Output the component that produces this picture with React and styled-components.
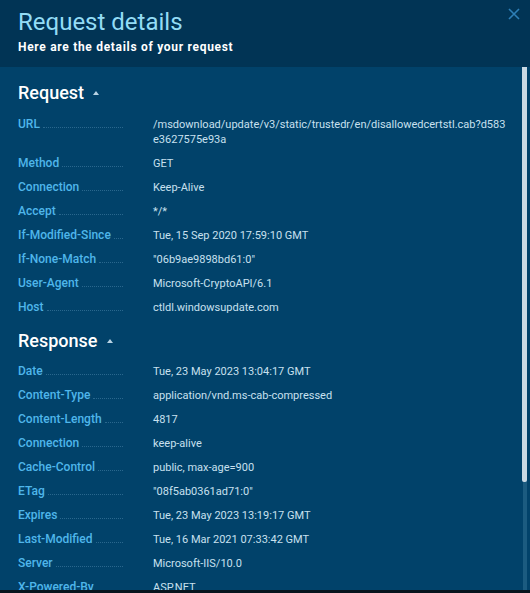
import React from "react";
import styled, { createGlobalStyle } from "styled-components";

const GlobalStyle = createGlobalStyle`
  html, body {
    margin: 0;
    padding: 0;
    background: #07141d;
  }
  body {
    font-family: Roboto, "Liberation Sans", sans-serif;
  }
`;

const Panel = styled.div`
  width: 530px;
  height: 590px;
  display: flex;
  flex-direction: column;
  background: #01426a;
  overflow: hidden;
`;

const Header = styled.div`
  position: relative;
  height: 67px;
  flex-shrink: 0;
  box-sizing: border-box;
  padding: 6px 18px 0;
  background: #013455;
`;

const Title = styled.h1`
  margin: 0;
  font-size: 24px;
  line-height: 32px;
  font-weight: 400;
  color: #93dcf5;
`;

const Subtitle = styled.div`
  margin-top: 2px;
  font-size: 12px;
  font-weight: 700;
  letter-spacing: 0.7px;
  color: #ffffff;
`;

const Close = styled.button`
  position: absolute;
  top: 6px;
  right: 8px;
  width: 16px;
  height: 16px;
  padding: 0;
  border: 0;
  background: none;
  color: #2e7fb7;
  cursor: pointer;
`;

const BodyWrap = styled.div`
  position: relative;
  flex: 1;
  min-height: 0;
`;

const Body = styled.div`
  height: 100%;
  overflow: hidden;
  padding-top: 4px;
  box-sizing: border-box;
`;

const Track = styled.div`
  position: absolute;
  top: 0;
  bottom: 0;
  right: 3px;
  width: 4px;
  background: #1b5b80;
`;

const Thumb = styled.div`
  position: absolute;
  top: 0;
  right: 3px;
  width: 5px;
  height: 415px;
  border-radius: 0 0 2px 2px;
  background: #c9d9e4;
`;

const Section = styled.section`
  padding: 0 10px 0 18px;
`;

const SectionTitle = styled.h2`
  margin: 0;
  height: ${(p) => (p.$first ? 42 : 40)}px;
  display: flex;
  align-items: center;
  gap: 9px;
  font-size: 18px;
  font-weight: 500;
  color: #ffffff;
`;

const Caret = styled.span`
  width: 0;
  height: 0;
  margin-top: 1px;
  border-left: 3.5px solid transparent;
  border-right: 3.5px solid transparent;
  border-bottom: 4px solid #b9d3e4;
`;

const Row = styled.div`
  display: grid;
  grid-template-columns: 105px 356px;
  column-gap: 30px;
  align-items: baseline;
  padding: 4px 0 5px;
  font-size: 11.5px;
  line-height: 15px;
`;

const Label = styled.div`
  display: flex;
  align-items: baseline;
  font-weight: 500;
  font-size: 12px;
  color: #4fb6ea;
  white-space: nowrap;
  overflow: hidden;

  &::after {
    content: "";
    flex: 1;
    min-width: 4px;
    margin-left: 3px;
    border-bottom: 1px dotted #2a678d;
  }
`;

const Value = styled.div`
  color: #c8e0ef;
  font-size: 11px;
  word-break: break-all;
`;

const request = [
  ["URL", "/msdownload/update/v3/static/trustedr/en/disallowedcertstl.cab?d583e3627575e93a"],
  ["Method", "GET"],
  ["Connection", "Keep-Alive"],
  ["Accept", "*/*"],
  ["If-Modified-Since", "Tue, 15 Sep 2020 17:59:10 GMT"],
  ["If-None-Match", "\"06b9ae9898bd61:0\""],
  ["User-Agent", "Microsoft-CryptoAPI/6.1"],
  ["Host", "ctldl.windowsupdate.com"],
];

const response = [
  ["Date", "Tue, 23 May 2023 13:04:17 GMT"],
  ["Content-Type", "application/vnd.ms-cab-compressed"],
  ["Content-Length", "4817"],
  ["Connection", "keep-alive"],
  ["Cache-Control", "public, max-age=900"],
  ["ETag", "\"08f5ab0361ad71:0\""],
  ["Expires", "Tue, 23 May 2023 13:19:17 GMT"],
  ["Last-Modified", "Tue, 16 Mar 2021 07:33:42 GMT"],
  ["Server", "Microsoft-IIS/10.0"],
  ["X-Powered-By", "ASP.NET"],
  ["Accept-Ranges", "bytes"],
  ["Age", "412"],
];

const Details = ({ title, rows, first }) => (
  <Section>
    <SectionTitle $first={first}>
      {title}
      <Caret />
    </SectionTitle>
    {rows.map(([k, v], i) => (
      <Row key={k + i}>
        <Label>{k}</Label>
        <Value>{v}</Value>
      </Row>
    ))}
  </Section>
);

const App = () => {
  return (
    <>
      <GlobalStyle />
      <Panel>
        <Header>
          <Title>Request details</Title>
          <Subtitle>Here are the details of your request</Subtitle>
          <Close aria-label="Close">
            <svg width="16" height="16" viewBox="0 0 16 16">
              <path d="M3 3L13 13M13 3L3 13" stroke="currentColor" strokeWidth="1.6" />
            </svg>
          </Close>
        </Header>
        <BodyWrap>
          <Body>
            <Details title="Request" rows={request} first />
            <Details title="Response" rows={response} />
          </Body>
          <Track />
          <Thumb />
        </BodyWrap>
      </Panel>
    </>
  );
};

export default App;
